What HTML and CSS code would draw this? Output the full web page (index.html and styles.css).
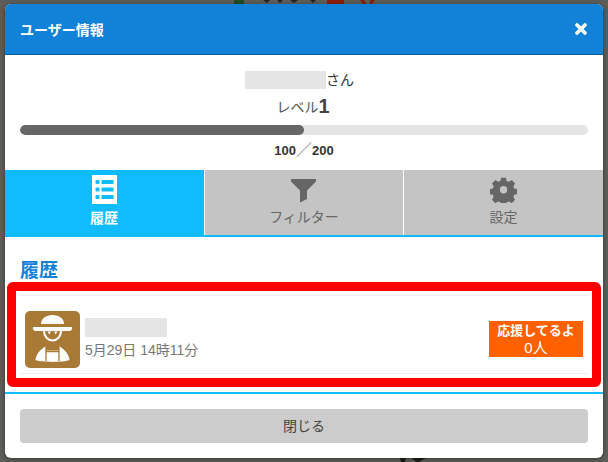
FILE: index.html
```html
<!DOCTYPE html>
<html lang="ja">
<head>
<meta charset="utf-8">
<title>ユーザー情報</title>
<link rel="stylesheet" href="styles.css">
</head>
<body>
<svg class="backdrop" width="608" height="462" viewBox="0 0 608 462" aria-hidden="true">
  <rect x="234" y="0" width="10" height="4" fill="#1f4a22"/>
  <path d="M263 0h7l-3 3zM277 0h6l-3 3zM290 0h8l-4 3zM310 0h6l-3 3z" fill="#222"/>
  <rect x="327" y="0" width="17" height="4" fill="#8a1c08"/>
  <path d="M360 0h4l2 4h-3zM370 0h5l-3 4h-2z" fill="#8a1c08"/>
  <path d="M400 458h6l-1 4h-4zM412 458h14l-7 4h-3z" fill="#1c1c1a"/>
</svg>
<main class="modal">
  <header class="modal-head">
    <h1 class="modal-title">ユーザー情報</h1>
    <svg class="close" width="12" height="12" viewBox="0 0 12 12" aria-label="閉じる"><path d="M2 2l8 8M10 2l-8 8" fill="none" stroke="#fff" stroke-width="3.600" stroke-linecap="round"/></svg>
  </header>
  <section class="profile">
    <div class="name-row"><span class="mask mask-name"></span><span>さん</span></div>
    <div class="level-row">レベル<b class="level-num">1</b></div>
    <div class="bar"><div class="bar-fill"></div></div>
    <div class="points">100<span class="points-sep">／</span>200</div>
  </section>
  <nav class="tabs">
    <div class="tab tab-active">
      <svg class="tab-icon" width="25" height="29" viewBox="0 0 25 29"><rect width="25" height="29" fill="#fff"/><g fill="#10bcfd"><rect x="3.500" y="5" width="4" height="4" rx="1"/><rect x="9.500" y="5" width="12" height="4" rx=".5"/><rect x="3.500" y="12.500" width="4" height="4" rx="1"/><rect x="9.500" y="12.500" width="12" height="4" rx=".5"/><rect x="3.500" y="20" width="4" height="4" rx="1"/><rect x="9.500" y="20" width="12" height="4" rx=".5"/></g></svg>
      <span class="tab-label">履歴</span>
    </div>
    <div class="tab">
      <svg class="tab-icon funnel" width="29" height="29" viewBox="0 0 29 29"><path d="M2 4h25v2.500L18 15.500V24l-7 3.500v-12L2 6.500z" fill="#666"/></svg>
      <span class="tab-label">フィルター</span>
    </div>
    <div class="tab">
      <svg class="tab-icon gear" width="27" height="27" viewBox="0 0 28 28"><path fill-rule="evenodd" fill="#666" d="M11.200 0.500h5.600l.8 3.700 2.500 1 3.200-2 3.900 3.900-2 3.200 1 2.500 3.700.8v5.600l-3.700.8-1 2.500 2 3.200-3.900 3.900-3.200-2-2.500 1-.8 3.700h-5.600l-.8-3.700-2.500-1-3.200 2-3.900-3.900 2-3.200-1-2.500-3.700-.8v-5.600l3.700-.8 1-2.500-2-3.200 3.900-3.900 3.200 2 2.500-1zM14 10a4.200 4.200 0 1 0 0 8.400 4.200 4.200 0 0 0 0-8.400z" transform="translate(1.300 1.300) scale(.91)"/></svg>
      <span class="tab-label">設定</span>
    </div>
  </nav>
  <section class="history">
    <h2 class="history-title">履歴</h2>
    <div class="history-item">
      <svg class="avatar" width="55" height="57" viewBox="0 0 55 57">
        <rect width="55" height="57" rx="5" fill="#a97a35"/>
        <path d="M16 13c0-5.500 5-9 11.500-9S39 7.500 39 13z" fill="#fff"/>
        <path d="M9 16h37c1.500 0 1.500 1 1 2-.5 1-1 2-2.500 2H10.500C9 20 8.500 19 8 18c-.5-1-.5-2 1-2z" fill="#fff"/>
        <path d="M19 20a8.500 9.500 0 1 0 17 0" fill="none" stroke="#fff" stroke-width="2"/>
        <path d="M22.500 20.500h3.500l-1.700 3zM29 20.500h3.500l-1.800 3z" fill="#fff"/>
        <path d="M21 35.500c-6 2.500-10 8-10.500 13.500 6 2.500 28 2.500 34 0-.5-5.500-4.500-11-10.500-13.500v4H21z" fill="#fff"/>
        <path d="M21 36v4.500h13V36M21 40v10M34 40v10" fill="none" stroke="#a97a35" stroke-width="1.300"/>
      </svg>
      <div class="item-text">
        <span class="mask mask-user"></span>
        <span class="item-date">5月29日 14時11分</span>
      </div>
      <div class="badge"><span class="badge-top">応援してるよ</span><span class="badge-count">0人</span></div>
    </div>
    <div class="highlight"></div>
  </section>
  <footer class="modal-foot">
    <button class="close-btn" type="button">閉じる</button>
  </footer>
</main>
</body>
</html>
```

FILE: styles.css
```css
html, body {
  margin: 0;
  height: 100%;
}
body {
  position: relative;
  width: 608px;
  height: 462px;
  overflow: hidden;
  background: #5c5c58;
  font-family: "Liberation Sans", "Noto Sans CJK JP", sans-serif;
  color: #333;
  font-size: 14px;
}
.backdrop {
  position: absolute;
  inset: 0;
}
.modal {
  position: relative;
  box-sizing: border-box;
  width: 598px;
  height: 454px;
  margin: 4px 0 0 5px;
  background: #fff;
  border-radius: 6px;
  overflow: hidden;
  display: flex;
  flex-direction: column;
  box-shadow: 0 1px 4px rgba(0, 0, 0, .4);
}
.modal-head {
  box-sizing: border-box;
  height: 51px;
  flex: none;
  display: flex;
  align-items: center;
  justify-content: space-between;
  padding: 0 15px;
  background: #1282d9;
  border-bottom: 1px solid #0b5a96;
}
.modal-title {
  margin: 0;
  font-size: 14px;
  font-weight: 700;
  color: #fff;
}
.close {
  margin-right: 1px;
}
.profile {
  box-sizing: border-box;
  height: 115px;
  flex: none;
  padding: 16px 15px 0;
  display: flex;
  flex-direction: column;
  align-items: center;
}
.mask {
  display: block;
  background: #e5e5e5;
}
.name-row {
  display: flex;
  align-items: center;
  height: 18px;
  line-height: 18px;
  margin-right: 9px;
  color: #333;
}
.mask-name {
  width: 81px;
  height: 18px;
}
.level-row {
  display: flex;
  align-items: center;
  height: 24px;
  margin-top: 5px;
  margin-right: 2px;
  color: #555;
}
.level-num {
  font-size: 20px;
  color: #444;
}
.bar {
  align-self: stretch;
  height: 10px;
  margin-top: 7px;
  border-radius: 5px;
  background: #e5e5e5;
  overflow: hidden;
}
.bar-fill {
  width: 50%;
  height: 100%;
  border-radius: 5px;
  background: #666;
}
.points {
  margin-top: 6px;
  font-size: 13px;
  line-height: 18px;
  font-weight: 700;
  color: #333;
}
.points-sep {
  font-size: 16px;
  font-weight: 400;
  color: #888;
}
.tabs {
  flex: none;
  display: grid;
  grid-template-columns: 199px 199px 200px;
  height: 67px;
  background: linear-gradient(#fff, #fff) 0 0 / 100% 65px no-repeat, #10bcfd;
}
.tab {
  box-sizing: border-box;
  height: 65px;
  display: flex;
  flex-direction: column;
  align-items: center;
  padding-top: 5px;
  background: #c4c4c4;
  color: #666;
}
.tab + .tab {
  border-left: 1px solid #fff;
}
.tab-active {
  height: 67px;
  background: #10bcfd;
  color: #fff;
}
.tab-icon {
  flex: none;
  display: block;
}
.funnel {
  margin-left: -1px;
}
.gear {
  margin: 1px 0 1px;
}
.tab-label {
  margin-top: 3px;
  font-size: 14px;
  line-height: 20px;
}
.tab-active .tab-label {
  font-weight: 700;
  margin-top: 4px;
  margin-right: 1px;
}
.history {
  position: relative;
  box-sizing: border-box;
  height: 157px;
  flex: none;
  padding: 22px 15px 0;
  border-bottom: 2px solid #10bcfd;
}
.history-title {
  margin: 0 0 12px;
  font-size: 19px;
  line-height: 24px;
  font-weight: 700;
  color: #1282d9;
}
.history-item {
  box-sizing: border-box;
  height: 79px;
  display: flex;
  align-items: center;
  padding: 0 5px;
  border-top: 1px solid #eee;
  border-bottom: 1px solid #eee;
}
.avatar {
  flex: none;
  display: block;
  margin-top: 10px;
}
.item-text {
  flex: 1;
  display: flex;
  flex-direction: column;
  margin: 9px 0 0 5px;
}
.mask-user {
  width: 82px;
  height: 19px;
}
.item-date {
  margin-top: 3px;
  font-size: 14px;
  line-height: 20px;
  color: #777;
}
.badge {
  box-sizing: border-box;
  width: 94px;
  height: 36px;
  display: flex;
  flex-direction: column;
  align-items: center;
  justify-content: center;
  background: #ff6000;
  color: #fff;
  margin-top: 9px;
}
.badge-top {
  font-size: 13px;
  line-height: 17px;
  font-weight: 700;
}
.badge-count {
  font-size: 15px;
  line-height: 18px;
}
.highlight {
  position: absolute;
  left: 2px;
  top: 45px;
  width: 594px;
  height: 105px;
  box-sizing: border-box;
  border: 9px solid #f00;
  border-radius: 6px;
}
.modal-foot {
  flex: 1;
  padding: 15px 15px 0;
}
.close-btn {
  display: block;
  width: 100%;
  height: 34px;
  border: 0;
  padding: 0 0 3px;
  border-radius: 4px;
  background: #ccc;
  color: #444;
  font: inherit;
  font-size: 14px;
}
```
